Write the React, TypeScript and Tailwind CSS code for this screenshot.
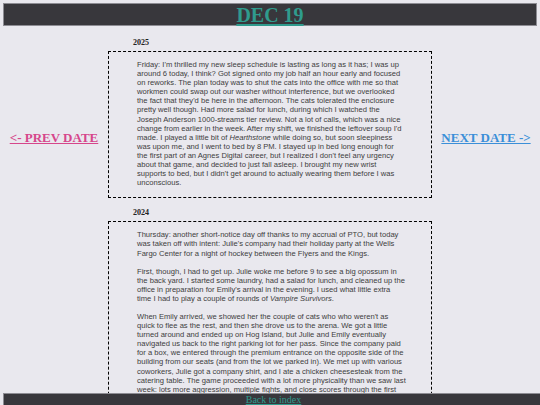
import React from 'react';

type Entry = {
  year: string;
  paragraphs: React.ReactNode[];
};

const entries: Entry[] = [
  {
    year: '2025',
    paragraphs: [
      <>
        Friday: I'm thrilled my new sleep schedule is lasting as long as it has; I was up around 6 today, I
        think? Got signed onto my job half an hour early and focused on reworks. The plan today was to shut
        the cats into the office with me so that workmen could swap out our washer without interference, but
        we overlooked the fact that they'd be here in the afternoon. The cats tolerated the enclosure pretty
        well though. Had more salad for lunch, during which I watched the Joseph Anderson 1000-streams tier
        review. Not a lot of calls, which was a nice change from earlier in the week. After my shift, we
        finished the leftover soup I'd made. I played a little bit of <i>Hearthstone</i> while doing so, but
        soon sleepiness was upon me, and I went to bed by 8 PM. I stayed up in bed long enough for the first
        part of an Agnes Digital career, but I realized I don't feel any urgency about that game, and decided
        to just fall asleep. I brought my new wrist supports to bed, but I didn't get around to actually
        wearing them before I was unconscious.
      </>,
    ],
  },
  {
    year: '2024',
    paragraphs: [
      <>
        Thursday: another short-notice day off thanks to my accrual of PTO, but today was taken off with
        intent: Julie's company had their holiday party at the Wells Fargo Center for a night of hockey
        between the Flyers and the Kings.
      </>,
      <>
        First, though, I had to get up. Julie woke me before 9 to see a big opossum in the back yard. I
        started some laundry, had a salad for lunch, and cleaned up the office in preparation for Emily's
        arrival in the evening. I used what little extra time I had to play a couple of rounds of{' '}
        <i>Vampire Survivors</i>.
      </>,
      <>
        When Emily arrived, we showed her the couple of cats who who weren't as quick to flee as the rest, and
        then she drove us to the arena. We got a little turned around and ended up on Hog Island, but Julie
        and Emily eventually navigated us back to the right parking lot for her pass. Since the company paid
        for a box, we entered through the premium entrance on the opposite side of the building from our seats
        (and from the lot we parked in). We met up with various coworkers, Julie got a company shirt, and I
        ate a chicken cheesesteak from the catering table. The game proceeded with a lot more physicality than
        we saw last week: lots more aggression, multiple fights, and close scores through the first two
        periods, but this time it was the Kings who pulled ahead for the win in the third.
      </>,
      <>
        We said our goodbyes to the coworkers and made the long walk back to the car. Emily dropped us off at
        home and we all went to bed soon after.
      </>,
    ],
  },
];

const serif = "font-['Liberation_Serif','Times_New_Roman',serif]";

const App = () => {
  return (
    <div className="min-h-screen bg-[#e9e8ee] pb-[14px]">
      {/* Title bar */}
      <header className="mx-[3px] pt-[3px]">
        <div className="flex h-[23px] items-center justify-center border border-[#8d8c93] bg-[#38373c]">
          <a
            href="#"
            className={`${serif} text-[20px] font-bold leading-none text-[#2f9b8d] underline decoration-[2px] underline-offset-[2px]`}
          >
            DEC 19
          </a>
        </div>
      </header>

      <div className="grid grid-cols-[108px_324px_108px]">
        {/* Previous day */}
        <div className="flex justify-center pt-[104px]">
          <a
            href="#"
            className={`${serif} h-fit text-[13px] font-bold leading-[16px] text-[#d6468b] underline`}
          >
            &lt;- PREV DATE
          </a>
        </div>

        {/* Entries */}
        <main className="pt-[12px]">
          {entries.map((entry) => (
            <section key={entry.year} className="mb-[10px]">
              <h3 className={`${serif} pl-[25px] text-[8px] font-bold leading-[10px] text-[#222]`}>
                {entry.year}
              </h3>
              <div className="mt-[3px] border border-dashed border-black pb-[10px] pl-[28px] pr-[25px] pt-[8px]">
                {entry.paragraphs.map((p, i) => (
                  <p
                    key={i}
                    className="mb-[9px] font-['Liberation_Sans',Arial,sans-serif] text-[7.6px] leading-[9.1px] text-[#3d3d3d] last:mb-0"
                  >
                    {p}
                  </p>
                ))}
              </div>
            </section>
          ))}
        </main>

        {/* Next day */}
        <div className="flex justify-center pt-[104px]">
          <a
            href="#"
            className={`${serif} h-fit text-[13px] font-bold leading-[16px] text-[#3b8fd8] underline`}
          >
            NEXT DATE -&gt;
          </a>
        </div>
      </div>

      {/* Footer bar */}
      <footer className="fixed bottom-0 left-[3px] flex h-[12px] w-full items-center justify-center border-l border-t border-[#8d8c93] bg-[#38373c]">
        <a href="#" className={`${serif} text-[10px] leading-[11px] text-[#2f9b8d] underline`}>
          Back to index
        </a>
      </footer>
    </div>
  );
};

export default App;
